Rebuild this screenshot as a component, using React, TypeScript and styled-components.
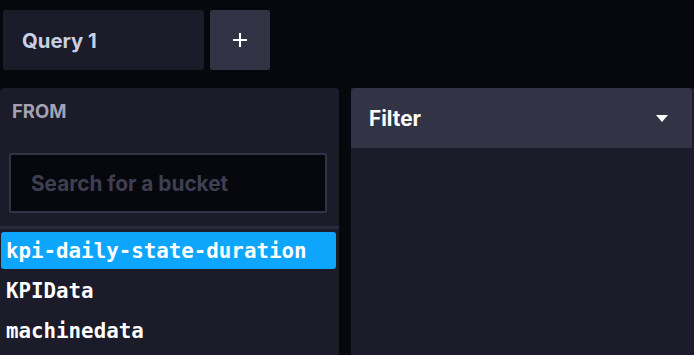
import React from "react";
import styled, { createGlobalStyle } from "styled-components";

const Global = createGlobalStyle`
  html, body { margin: 0; padding: 0; background: #07070e; overflow: hidden; }
  body { font-family: Inter, "Noto Sans", sans-serif; }
  * { box-sizing: border-box; }
`;

const Page = styled.div`
  width: 694px;
  height: 355px;
  display: flex;
  flex-direction: column;
  background: #07070e;
  overflow: hidden;
`;

const TabBar = styled.div`
  display: flex;
  gap: 6px;
  padding: 10px 0 0 3px;
  height: 88px;
`;

const QueryTab = styled.div`
  width: 201px;
  height: 60px;
  background: #1b1b29;
  border-radius: 3px;
  display: flex;
  align-items: center;
  padding-left: 19px;
  color: #c7d0e3;
  font-weight: 700;
  font-size: 20.3px;
`;

const AddButton = styled.div`
  width: 60px;
  height: 60px;
  background: #333346;
  border-radius: 3px;
  display: flex;
  align-items: center;
  justify-content: center;
`;

const Main = styled.div`
  flex: 1;
  display: flex;
  gap: 12px;
  min-height: 0;
`;

const FromPanel = styled.div`
  width: 339px;
  background: #1b1b29;
  border-radius: 4px 4px 0 0;
  display: flex;
  flex-direction: column;
`;

const PanelTitle = styled.div`
  padding: 12px 12px 0;
  height: 65px;
  color: #a3a3b3;
  font-weight: 700;
  font-size: 18.5px;
`;

const SearchBox = styled.div`
  margin-left: 9px;
  width: 318px;
  height: 60px;
  background: #07070e;
  border: 2px solid #333346;
  border-radius: 2px;
  display: flex;
  align-items: center;
  padding-left: 20px;
  color: #3f3f52;
  font-weight: 700;
  font-size: 20.8px;
`;

const Divider = styled.div`
  margin-top: 13px;
  height: 3px;
  background: #2a2a3a;
`;

const BucketList = styled.div`
  display: flex;
  flex-direction: column;
  gap: 3px;
  padding: 3px 3px 0 1px;
`;

const BucketItem = styled.div<{ $active?: boolean }>`
  height: 37px;
  display: flex;
  align-items: center;
  padding-left: 5px;
  border-radius: 3px;
  background: ${(p) => (p.$active ? "#0ea5fd" : "transparent")};
  color: #ffffff;
  font-family: "DejaVu Sans Mono", "Liberation Mono", monospace;
  font-weight: 700;
  font-size: 20.8px;
`;

const FilterPanel = styled.div`
  flex: 1;
  background: #1b1b29;
  display: flex;
  flex-direction: column;
`;

const FilterHeader = styled.div`
  height: 60px;
  margin-right: 2px;
  background: #333346;
  border-radius: 4px 4px 0 0;
  display: flex;
  align-items: center;
  justify-content: space-between;
  padding: 0 24px 0 18px;
  color: #ffffff;
  font-weight: 700;
  font-size: 20.8px;
`;

export default function App() {
  return (
    <Page>
      <Global />
      <TabBar>
        <QueryTab>Query 1</QueryTab>
        <AddButton>
          <svg width="16" height="16" viewBox="0 0 16 16">
            <path d="M8 1v14M1 8h14" stroke="#fff" strokeWidth="2" />
          </svg>
        </AddButton>
      </TabBar>
      <Main>
        <FromPanel>
          <PanelTitle>FROM</PanelTitle>
          <SearchBox>Search for a bucket</SearchBox>
          <Divider />
          <BucketList>
            <BucketItem $active>kpi-daily-state-duration</BucketItem>
            <BucketItem>KPIData</BucketItem>
            <BucketItem>machinedata</BucketItem>
          </BucketList>
        </FromPanel>
        <FilterPanel>
          <FilterHeader>
            Filter
            <svg width="12" height="7" viewBox="0 0 12 7">
              <path d="M0 0h12L6 7z" fill="#fff" />
            </svg>
          </FilterHeader>
        </FilterPanel>
      </Main>
    </Page>
  );
}
